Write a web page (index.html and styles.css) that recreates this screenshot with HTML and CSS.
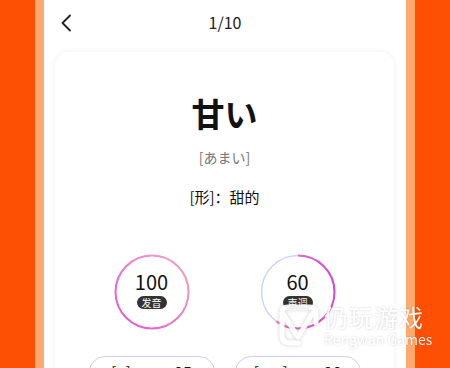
FILE: index.html
```html
<!DOCTYPE html>
<html lang="zh">
<head>
<meta charset="utf-8">
<link rel="stylesheet" href="styles.css">
</head>
<body>
<div class="frame">
  <div class="side"></div>
  <div class="stripe"></div>
  <main class="main">
    <header class="header">
      <svg class="back" width="12" height="18" viewBox="0 0 12 18"><path d="M10 1.5 L2.5 9 L10 16.5" fill="none" stroke="#222" stroke-width="1.8" stroke-linecap="round" stroke-linejoin="round"/></svg>
      <div class="title">1/10</div>
    </header>
    <section class="card">
      <div class="word">甘い</div>
      <div class="kana">[あまい]</div>
      <div class="mean">[形]：甜的</div>
      <div class="scores">
        <div class="score">
          <svg class="ring" width="76" height="76" viewBox="0 0 76 76">
            <defs>
              <linearGradient id="g1" x1="1" y1="0" x2="0" y2="1">
                <stop offset="0" stop-color="#f8a6bf"/>
                <stop offset="1" stop-color="#e04fe0"/>
              </linearGradient>
            </defs>
            <circle cx="38" cy="38" r="36.5" fill="none" stroke="url(#g1)" stroke-width="2"/>
          </svg>
          <div class="num">100</div>
          <div class="tag">发音</div>
        </div>
        <div class="score">
          <svg class="ring" width="76" height="76" viewBox="0 0 76 76">
            <defs>
              <linearGradient id="g2" x1="0" y1="0" x2="0" y2="1">
                <stop offset="0" stop-color="#f58aa8"/>
                <stop offset="1" stop-color="#d845d8"/>
              </linearGradient>
            </defs>
            <circle cx="38" cy="38" r="36.5" fill="none" stroke="#cdd6f6" stroke-width="1.5"/>
            <circle cx="38" cy="38" r="36.5" fill="none" stroke="url(#g2)" stroke-width="2" stroke-dasharray="137.6 229.3" transform="rotate(-90 38 38)"/>
          </svg>
          <div class="num">60</div>
          <div class="tag">声调</div>
        </div>
      </div>
      <div class="pills">
        <div class="pill"><span>[a]</span><span>95</span></div>
        <div class="pill"><span>[ma]</span><span>90</span></div>
      </div>
    </section>
  </main>
  <div class="stripe"></div>
  <div class="side"></div>
</div>
<div class="watermark">
  <svg class="wm-logo" width="44" height="44" viewBox="0 0 44 44"><path d="M6 10 Q6 4 12 4 L34 4 Q40 4 40 10 L40 20 M6 10 L6 32 Q6 40 14 40 L22 40 M8 12 L22 34 L38 8" fill="none" stroke="#fff" stroke-width="5" stroke-linecap="round" stroke-linejoin="round"/></svg>
  <div class="wm-text">
    <div class="wm-cn">仍玩游戏</div>
    <div class="wm-en">Rengwan Games</div>
  </div>
</div>
</body>
</html>
```
FILE: styles.css
```css
* { box-sizing: border-box; }
html, body { margin: 0; padding: 0; }
body {
  width: 450px;
  height: 368px;
  overflow: hidden;
  background: #fe5005;
  font-family: "Noto Sans CJK SC", "Noto Sans", sans-serif;
  position: relative;
}
.frame {
  display: flex;
  height: 368px;
  overflow: hidden;
}
.side { width: 35px; background: #fe5005; flex-shrink: 0; }
.stripe { width: 9px; background: #ffa96c; flex-shrink: 0; }
.main {
  width: 362px;
  flex-shrink: 0;
  background: #fff;
  display: flex;
  flex-direction: column;
  overflow: hidden;
}
.header {
  height: 46px;
  flex-shrink: 0;
  position: relative;
  display: flex;
  align-items: center;
  justify-content: center;
}
.back { position: absolute; left: 16px; top: 14px; }
.title { font-size: 16px; color: #222; line-height: 20px; margin-top: -2px; }
.card {
  margin: 6px 12px 0 11px;
  background: #fff;
  border-radius: 14px;
  box-shadow: 0 0 6px rgba(0,0,0,0.07);
  flex-shrink: 0;
  height: 360px;
  display: flex;
  flex-direction: column;
  align-items: center;
  padding-top: 41px;
}
.word {
  font-size: 33px;
  font-weight: 700;
  line-height: 40px;
  color: #111;
}
.kana {
  margin-top: 14px;
  font-size: 14px;
  line-height: 20px;
  color: #777;
}
.mean {
  margin-top: 20px;
  font-size: 15px;
  line-height: 20px;
  color: #111;
}
.scores {
  margin-top: 47px;
  display: flex;
  gap: 70px;
}
.score {
  width: 76px;
  height: 76px;
  position: relative;
  display: flex;
  flex-direction: column;
  align-items: center;
  padding-top: 16px;
}
.ring { position: absolute; left: 0; top: 0; }
.num { font-size: 20px; line-height: 24px; color: #111; }
.tag {
  margin-top: 2px;
  background: #333;
  color: #fff;
  font-size: 10px;
  line-height: 13px;
  padding: 0 5px;
  border-radius: 7px;
}
.pills {
  margin-top: 26px;
  display: flex;
  gap: 20px;
}
.pill {
  width: 126px;
  height: 32px;
  border: 1.5px solid #c9d2f5;
  border-radius: 16px;
  display: flex;
  justify-content: space-around;
  align-items: center;
  font-size: 16px;
  color: #111;
}
.watermark {
  position: absolute;
  left: 276px;
  top: 303px;
  display: flex;
  align-items: center;
  gap: 4px;
  opacity: 0.92;
}
.wm-logo { filter: drop-shadow(0 0 2px rgba(0,0,0,0.2)); }
.wm-text {
  display: flex;
  flex-direction: column;
  color: #fff;
  text-shadow: 0 0 3px rgba(0,0,0,0.22);
}
.wm-cn { font-size: 24px; line-height: 28px; letter-spacing: 1px; }
.wm-en { font-size: 14px; line-height: 16px; }
```
